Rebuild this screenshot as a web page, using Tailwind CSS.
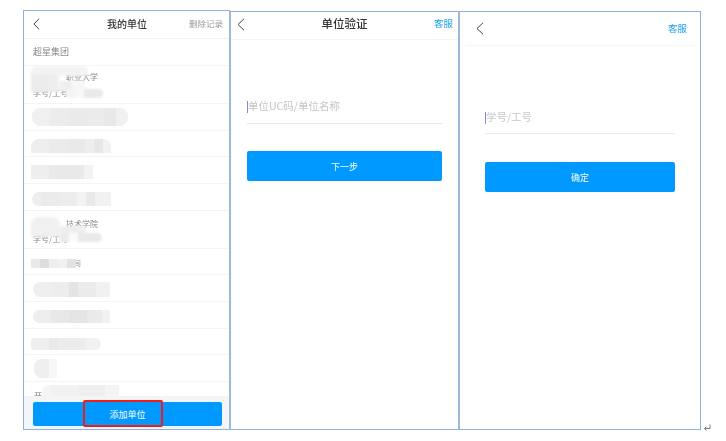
<!DOCTYPE html>
<html lang="zh">
<head>
<meta charset="utf-8">
<script src="https://cdn.jsdelivr.net/npm/@tailwindcss/browser@4"></script>
</head>
<body class="bg-white">
<div class="w-[726px] h-[441px] overflow-hidden flex items-end pl-[23px] pb-[11px] font-['Noto_Sans_CJK_SC','Noto_Sans',sans-serif] text-[#333] relative">

  <!-- Panel 1 -->
  <section class="w-[207px] h-[420px] border border-[#8fb0dc] flex flex-col overflow-hidden shrink-0 blur-[0.3px]">
    <header class="h-[28px] shrink-0 flex items-center justify-between pl-[9px] pr-[6px] pb-[2px] border-b border-[#f3f3f3]">
      <svg class="w-[7px] h-[12px]" viewBox="0 0 7 12" fill="none" stroke="#444" stroke-width="1"><path d="M6 .8 1 6l5 5.2"/></svg>
      <h1 class="text-[10px] text-[#333] ml-[25px] font-medium leading-none">我的单位</h1>
      <span class="text-[8.5px] text-[#999] leading-none">删除记录</span>
    </header>
    <div class="flex-1 min-h-0 overflow-hidden flex flex-col text-[9px] text-[#888]">
      <div class="h-[27px] shrink-0 flex items-center pl-[9px] border-b border-[#f5f5f5]">超星集团</div>

      <div class="h-[38px] shrink-0 relative border-b border-[#f5f5f5] pl-[9px] pt-[22px] text-[8px] leading-[10px]">学号/工号
        <span class="absolute left-[42px] top-[6px] leading-[10px]">职业大学</span>
        <div class="absolute left-[7px] top-0 w-[57px] h-[10px] bg-[#f3f3f3] rounded-t-md blur-[1px]"></div>
        <div class="absolute left-[7px] top-[9px] flex h-[17px] blur-[1px]"><i class="w-[18px] bg-[#ececec]"></i><i class="w-[10px] bg-[#eeeeee]"></i></div>
        <div class="absolute left-[35px] top-[15px] flex h-[10px] blur-[1px]"><i class="w-[13px] bg-[#efefef]"></i><i class="w-[13px] bg-[#f6f6f6]"></i></div>
        <div class="absolute left-[42px] top-[23px] flex h-[9px] blur-[1px]"><i class="w-[10px] bg-[#f4f4f4]"></i><i class="w-[8px] bg-[#f8f8f8]"></i><i class="w-[19px] rounded-r-md bg-[#e9e9e9]"></i></div>
      </div>

      <div class="h-[27px] shrink-0 flex items-center pl-[8px] border-b border-[#f5f5f5]">
        <div class="flex h-[18px] rounded-lg overflow-hidden blur-[0.6px]"><i class="w-[18px] bg-[#f0f0f0]"></i><i class="w-[18px] bg-[#ececec]"></i><i class="w-[18px] bg-[#eaeaea]"></i><i class="w-[18px] bg-[#ebebeb]"></i><i class="w-[12px] bg-[#e8e8e8]"></i><i class="w-[12px] bg-[#f0f0f0]"></i></div>
      </div>
      <div class="h-[26px] shrink-0 flex items-end pb-[3px] pl-[7px] border-b border-[#f5f5f5]">
        <div class="flex h-[14px] rounded-t-lg overflow-hidden blur-[0.6px]"><i class="w-[18px] bg-[#eee]"></i><i class="w-[18px] bg-[#ebebeb]"></i><i class="w-[18px] bg-[#e9e9e9]"></i><i class="w-[9px] bg-[#eee]"></i><i class="w-[9px] bg-[#e6e6e6]"></i><i class="w-[8px] bg-[#f1f1f1]"></i></div>
      </div>
      <div class="h-[27px] shrink-0 flex items-center pl-[7px] pt-[4px] border-b border-[#f5f5f5]">
        <div class="flex h-[14px] blur-[0.6px]"><i class="w-[18px] bg-[#eee]"></i><i class="w-[35px] bg-[#e9e9e9]"></i><i class="w-[9px] bg-[#f3f3f3]"></i></div>
      </div>
      <div class="h-[27px] shrink-0 flex items-center pl-[8px] pt-[4px] border-b border-[#f3f3f3]">
        <div class="flex h-[14px] rounded-l-lg overflow-hidden blur-[0.6px]"><i class="w-[9px] bg-[#eee]"></i><i class="w-[18px] bg-[#ebebeb]"></i><i class="w-[18px] bg-[#ededed]"></i><i class="w-[9px] bg-[#f3f3f3]"></i><i class="w-[9px] bg-[#e9e9e9]"></i><i class="w-[16px] bg-[#f1f1f1]"></i></div>
      </div>

      <div class="h-[38px] shrink-0 relative border-b border-[#f5f5f5] pl-[9px] pt-[23px] text-[8px] leading-[10px]">学号/工号
        <span class="absolute left-[42px] top-[8px] leading-[10px]">技术学院</span>
        <div class="absolute left-[7px] top-[6px] w-[29px] h-[20px] bg-[#f0f0f0] rounded-t-lg blur-[1px]"></div>
        <div class="absolute left-[36px] top-[15px] w-[26px] h-[9px] bg-[#eeeeee] blur-[1px]"></div>
        <div class="absolute left-[36px] top-[22px] flex h-[9px] blur-[1px]"><i class="w-[9px] bg-[#ebebeb]"></i><i class="w-[9px] bg-[#fafafa]"></i><i class="w-[24px] rounded-r-md bg-[#e9e9e9]"></i></div>
      </div>

      <div class="h-[26px] shrink-0 flex items-center pl-[7px] pt-[4px] border-b border-[#f5f5f5]">
        <div class="flex h-[9px] blur-[0.5px]"><i class="w-[9px] bg-[#e9e9e9]"></i><i class="w-[9px] bg-[#ddd]"></i><i class="w-[9px] bg-[#eee]"></i><i class="w-[9px] bg-[#f1f1f1]"></i><i class="w-[9px] bg-[#e2e2e2]"></i></div>
        <span class="text-[7px] leading-none -ml-[2px]">司</span>
      </div>
      <div class="h-[27px] shrink-0 flex items-center pl-[9px] pt-[2px] border-b border-[#f5f5f5]">
        <div class="flex h-[15px] rounded-l-lg overflow-hidden blur-[0.6px]"><i class="w-[18px] bg-[#efefef]"></i><i class="w-[18px] bg-[#ededed]"></i><i class="w-[9px] bg-[#e4e4e4]"></i><i class="w-[18px] bg-[#ebebeb]"></i><i class="w-[14px] bg-[#f1f1f1]"></i></div>
      </div>
      <div class="h-[27px] shrink-0 flex items-center pl-[9px] pt-[2px] border-b border-[#f5f5f5]">
        <div class="flex h-[13px] rounded-l-lg overflow-hidden blur-[0.6px]"><i class="w-[18px] bg-[#eee]"></i><i class="w-[18px] bg-[#e8e8e8]"></i><i class="w-[18px] bg-[#e5e5e5]"></i><i class="w-[15px] bg-[#eaeaea]"></i><i class="w-[8px] bg-[#f2f2f2]"></i></div>
      </div>
      <div class="h-[26px] shrink-0 flex items-center pl-[7px] pt-[4px] border-b border-[#f5f5f5]">
        <div class="flex h-[12px] rounded-r-md rounded-l-sm overflow-hidden blur-[0.6px]"><i class="w-[18px] bg-[#eee]"></i><i class="w-[9px] bg-[#e9e9e9]"></i><i class="w-[27px] bg-[#ececec]"></i><i class="w-[16px] bg-[#f1f1f1]"></i></div>
      </div>
      <div class="h-[27px] shrink-0 flex items-center pl-[10px] border-b border-[#f5f5f5]">
        <div class="flex h-[19px] rounded-l-lg overflow-hidden blur-[0.6px]"><i class="w-[15px] bg-[#efefef]"></i><i class="w-[8px] bg-[#f7f7f7]"></i></div>
      </div>
      <div class="h-[15px] shrink-0 relative pl-[10px] pt-[9px] text-[8px] leading-[10px] text-[#777] overflow-hidden">开
        <div class="absolute left-[18px] top-[3px] flex h-[15px] rounded-l-lg overflow-hidden blur-[0.6px]"><i class="w-[9px] bg-[#f5f5f5]"></i><i class="w-[27px] bg-[#f1f1f1]"></i><i class="w-[27px] bg-[#efefef]"></i><i class="w-[14px] bg-[#f4f4f4]"></i></div>
      </div>
    </div>
    <div class="h-[33px] shrink-0 bg-[#f4f5f7] px-[9px] pt-[6px] relative z-10">
      <button class="block w-[189px] h-[24px] rounded-[2px] bg-[#0099ff] text-white text-[9px] leading-none">添加单位</button>
      <div class="absolute left-[59px] top-[4px] w-[80px] h-[27px] border-2 border-[#ee1c1c] rounded-[2px]"></div>
    </div>
  </section>

  <!-- Panel 2 -->
  <section class="w-[230px] h-[419px] border border-l-2 border-[#8fb0dc] border-l-[#9db9de] -ml-px flex flex-col shrink-0 bg-white blur-[0.3px]">
    <header class="h-[28px] shrink-0 flex items-center justify-between pl-[6px] pr-[5px] pb-[3px] border-b border-[#f5f5f5]">
      <svg class="w-[8px] h-[13px]" viewBox="0 0 8 13" fill="none" stroke="#444" stroke-width="1"><path d="M7 .8 1 6.5l6 5.7"/></svg>
      <h2 class="text-[11.5px] leading-none text-[#333] font-medium ml-[10px]">单位验证</h2>
      <span class="text-[9.5px] leading-none text-[#1a9fe8]">客服</span>
    </header>
    <div class="px-[16px] pt-[59px] flex flex-col">
      <div class="h-[25px] flex items-center border-b border-[#e6e6e6] pb-[9px]">
        <i class="w-px h-[12px] bg-[#7d8ddb]"></i>
        <span class="text-[10.5px] leading-none text-[#c4c4c4]">单位UC码/单位名称</span>
      </div>
      <button class="block mt-[27px] h-[30px] rounded-[2px] bg-[#0099ff] text-white text-[9px] leading-none">下一步</button>
    </div>
  </section>

  <!-- Panel 3 -->
  <section class="w-[243px] h-[419px] border border-l-2 border-[#8fb0dc] border-l-[#9db9de] -ml-px flex flex-col shrink-0 bg-white blur-[0.3px]">
    <header class="h-[34px] shrink-0 mx-[6px] flex items-center justify-between pl-[10px] pr-[7px] border-b border-[#f5f5f5]">
      <svg class="w-[8px] h-[13px]" viewBox="0 0 8 13" fill="none" stroke="#444" stroke-width="1"><path d="M7 .8 1 6.5l6 5.7"/></svg>
      <span class="text-[9.5px] leading-none text-[#1a9fe8]">客服</span>
    </header>
    <div class="pl-[25px] pr-[25px] pt-[60px] flex flex-col">
      <div class="h-[28px] flex items-center border-b border-[#ebebeb] pb-[4px]">
        <i class="w-px h-[12px] bg-[#7d8ddb]"></i>
        <span class="text-[10.5px] leading-none text-[#c8c8c8]">学号/工号</span>
      </div>
      <button class="block mt-[28px] h-[30px] rounded-[2px] bg-[#0099ff] text-white text-[9px] leading-none">确定</button>
    </div>
  </section>

  <svg class="absolute left-[703px] top-[424px] w-[8px] h-[8px]" viewBox="0 0 8 8" fill="none" stroke="#777" stroke-width="1"><path d="M7 .5V4.5H1.5M3.5 2.5l-2 2 2 2"/></svg>
</div>
</body>
</html>
